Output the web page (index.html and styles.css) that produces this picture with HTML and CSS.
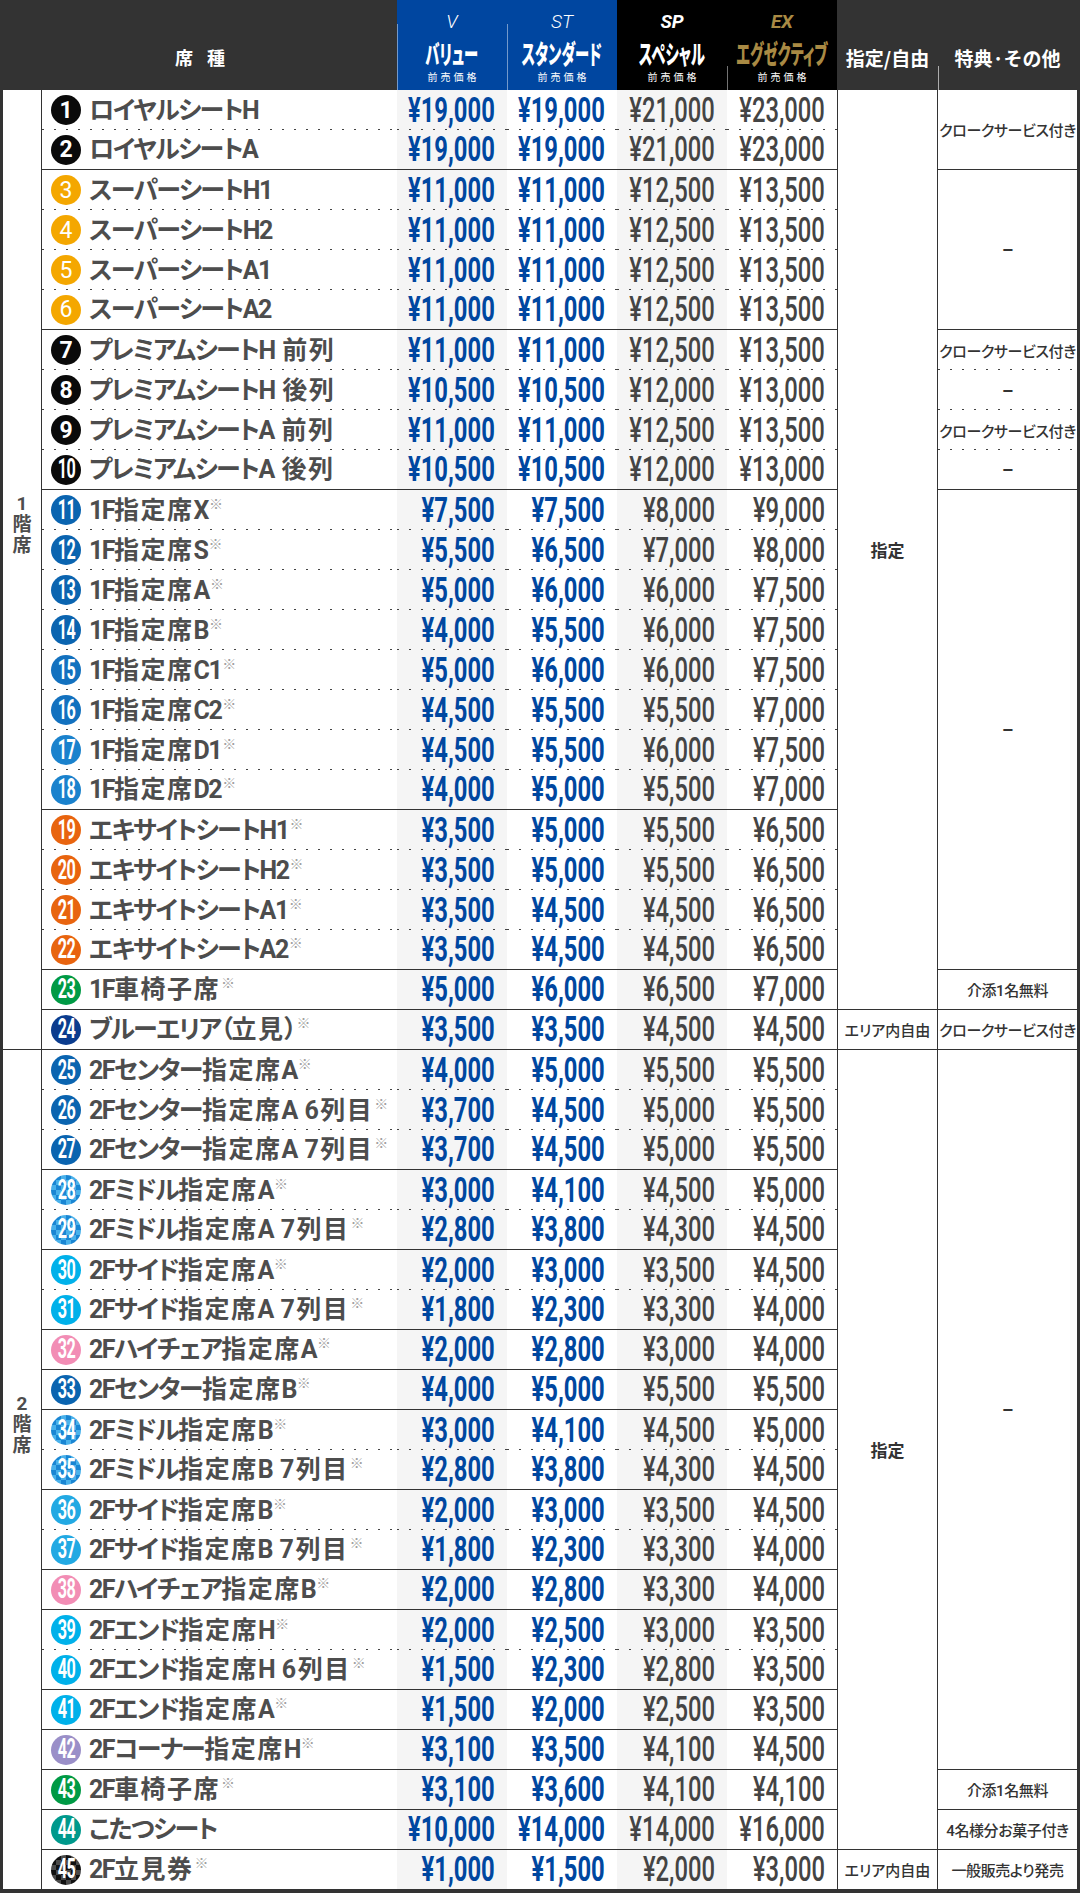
FILE: index.html
```html
<!DOCTYPE html>
<html lang="ja">
<head>
<meta charset="utf-8">
<title>席種・価格表</title>
<link rel="stylesheet" href="styles.css">
</head>
<body>
<div class="tbl">
  <div class="h hs">席 種</div>
  <div class="h hp hv"><em class="lt">V</em><strong class="tt"><span>バリュー</span></strong><small>前売価格</small></div>
  <div class="h hp hst"><em class="lt">ST</em><strong class="tt"><span>スタンダード</span></strong><small>前売価格</small></div>
  <div class="h hp hsp"><em class="bd">SP</em><strong class="tt"><span>スペシャル</span></strong><small>前売価格</small></div>
  <div class="h hp hex"><em class="bd gold">EX</em><strong class="tt gold"><span>エグゼクティブ</span></strong><small>前売価格</small></div>
  <div class="h hsh">指定/自由</div>
  <div class="h htk">特典·その他</div>

  <div class="r d"><div class="fl s24">1<br>階<br>席</div><div class="nmc"><i class="n k"><b>1</b></i><span class="nm">ロイヤルシートH</span></div><div class="p v"><span>¥19,000</span></div><div class="p st"><span>¥19,000</span></div><div class="p sp"><span>¥21,000</span></div><div class="p ex"><span>¥23,000</span></div><div class="sh s23">指定</div><div class="tk s2">クロークサービス付き</div></div>
  <div class="r e"><div class="nmc"><i class="n k"><b>2</b></i><span class="nm">ロイヤルシートA</span></div><div class="p v"><span>¥19,000</span></div><div class="p st"><span>¥19,000</span></div><div class="p sp"><span>¥21,000</span></div><div class="p ex"><span>¥23,000</span></div></div>
  <div class="r d"><div class="nmc"><i class="n y"><b>3</b></i><span class="nm">スーパーシートH1</span></div><div class="p v"><span>¥11,000</span></div><div class="p st"><span>¥11,000</span></div><div class="p sp"><span>¥12,500</span></div><div class="p ex"><span>¥13,500</span></div><div class="tk s4"><span class="dash">–</span></div></div>
  <div class="r d"><div class="nmc"><i class="n y"><b>4</b></i><span class="nm">スーパーシートH2</span></div><div class="p v"><span>¥11,000</span></div><div class="p st"><span>¥11,000</span></div><div class="p sp"><span>¥12,500</span></div><div class="p ex"><span>¥13,500</span></div></div>
  <div class="r d"><div class="nmc"><i class="n y"><b>5</b></i><span class="nm">スーパーシートA1</span></div><div class="p v"><span>¥11,000</span></div><div class="p st"><span>¥11,000</span></div><div class="p sp"><span>¥12,500</span></div><div class="p ex"><span>¥13,500</span></div></div>
  <div class="r e"><div class="nmc"><i class="n y"><b>6</b></i><span class="nm">スーパーシートA2</span></div><div class="p v"><span>¥11,000</span></div><div class="p st"><span>¥11,000</span></div><div class="p sp"><span>¥12,500</span></div><div class="p ex"><span>¥13,500</span></div></div>
  <div class="r d"><div class="nmc"><i class="n k"><b>7</b></i><span class="nm">プレミアムシートH<span class="kj"> 前列</span></span></div><div class="p v"><span>¥11,000</span></div><div class="p st"><span>¥11,000</span></div><div class="p sp"><span>¥12,500</span></div><div class="p ex"><span>¥13,500</span></div><div class="tk d">クロークサービス付き</div></div>
  <div class="r d"><div class="nmc"><i class="n k"><b>8</b></i><span class="nm">プレミアムシートH<span class="kj"> 後列</span></span></div><div class="p v"><span>¥10,500</span></div><div class="p st"><span>¥10,500</span></div><div class="p sp"><span>¥12,000</span></div><div class="p ex"><span>¥13,000</span></div><div class="tk d"><span class="dash">–</span></div></div>
  <div class="r d"><div class="nmc"><i class="n k"><b>9</b></i><span class="nm">プレミアムシートA<span class="kj"> 前列</span></span></div><div class="p v"><span>¥11,000</span></div><div class="p st"><span>¥11,000</span></div><div class="p sp"><span>¥12,500</span></div><div class="p ex"><span>¥13,500</span></div><div class="tk d">クロークサービス付き</div></div>
  <div class="r e"><div class="nmc"><i class="n k w2"><b>10</b></i><span class="nm">プレミアムシートA<span class="kj"> 後列</span></span></div><div class="p v"><span>¥10,500</span></div><div class="p st"><span>¥10,500</span></div><div class="p sp"><span>¥12,000</span></div><div class="p ex"><span>¥13,000</span></div><div class="tk"><span class="dash">–</span></div></div>
  <div class="r d"><div class="nmc"><i class="n b1 w2"><b>11</b></i><span class="nm">1F<span class="kj">指定席</span>X<sup>※</sup></span></div><div class="p v"><span>¥7,500</span></div><div class="p st"><span>¥7,500</span></div><div class="p sp"><span>¥8,000</span></div><div class="p ex"><span>¥9,000</span></div><div class="tk s12"><span class="dash">–</span></div></div>
  <div class="r d"><div class="nmc"><i class="n b1 w2"><b>12</b></i><span class="nm">1F<span class="kj">指定席</span>S<sup>※</sup></span></div><div class="p v"><span>¥5,500</span></div><div class="p st"><span>¥6,500</span></div><div class="p sp"><span>¥7,000</span></div><div class="p ex"><span>¥8,000</span></div></div>
  <div class="r d"><div class="nmc"><i class="n b1 w2"><b>13</b></i><span class="nm">1F<span class="kj">指定席</span>A<sup>※</sup></span></div><div class="p v"><span>¥5,000</span></div><div class="p st"><span>¥6,000</span></div><div class="p sp"><span>¥6,000</span></div><div class="p ex"><span>¥7,500</span></div></div>
  <div class="r d"><div class="nmc"><i class="n b1 w2"><b>14</b></i><span class="nm">1F<span class="kj">指定席</span>B<sup>※</sup></span></div><div class="p v"><span>¥4,000</span></div><div class="p st"><span>¥5,500</span></div><div class="p sp"><span>¥6,000</span></div><div class="p ex"><span>¥7,500</span></div></div>
  <div class="r d"><div class="nmc"><i class="n b2 w2"><b>15</b></i><span class="nm">1F<span class="kj">指定席</span>C1<sup>※</sup></span></div><div class="p v"><span>¥5,000</span></div><div class="p st"><span>¥6,000</span></div><div class="p sp"><span>¥6,000</span></div><div class="p ex"><span>¥7,500</span></div></div>
  <div class="r d"><div class="nmc"><i class="n b2 w2"><b>16</b></i><span class="nm">1F<span class="kj">指定席</span>C2<sup>※</sup></span></div><div class="p v"><span>¥4,500</span></div><div class="p st"><span>¥5,500</span></div><div class="p sp"><span>¥5,500</span></div><div class="p ex"><span>¥7,000</span></div></div>
  <div class="r d"><div class="nmc"><i class="n b3 w2"><b>17</b></i><span class="nm">1F<span class="kj">指定席</span>D1<sup>※</sup></span></div><div class="p v"><span>¥4,500</span></div><div class="p st"><span>¥5,500</span></div><div class="p sp"><span>¥6,000</span></div><div class="p ex"><span>¥7,500</span></div></div>
  <div class="r e"><div class="nmc"><i class="n b3 w2"><b>18</b></i><span class="nm">1F<span class="kj">指定席</span>D2<sup>※</sup></span></div><div class="p v"><span>¥4,000</span></div><div class="p st"><span>¥5,000</span></div><div class="p sp"><span>¥5,500</span></div><div class="p ex"><span>¥7,000</span></div></div>
  <div class="r d"><div class="nmc"><i class="n o w2"><b>19</b></i><span class="nm">エキサイトシートH1<sup>※</sup></span></div><div class="p v"><span>¥3,500</span></div><div class="p st"><span>¥5,000</span></div><div class="p sp"><span>¥5,500</span></div><div class="p ex"><span>¥6,500</span></div></div>
  <div class="r d"><div class="nmc"><i class="n o w2"><b>20</b></i><span class="nm">エキサイトシートH2<sup>※</sup></span></div><div class="p v"><span>¥3,500</span></div><div class="p st"><span>¥5,000</span></div><div class="p sp"><span>¥5,500</span></div><div class="p ex"><span>¥6,500</span></div></div>
  <div class="r d"><div class="nmc"><i class="n o w2"><b>21</b></i><span class="nm">エキサイトシートA1<sup>※</sup></span></div><div class="p v"><span>¥3,500</span></div><div class="p st"><span>¥4,500</span></div><div class="p sp"><span>¥4,500</span></div><div class="p ex"><span>¥6,500</span></div></div>
  <div class="r e"><div class="nmc"><i class="n o w2"><b>22</b></i><span class="nm">エキサイトシートA2<sup>※</sup></span></div><div class="p v"><span>¥3,500</span></div><div class="p st"><span>¥4,500</span></div><div class="p sp"><span>¥4,500</span></div><div class="p ex"><span>¥6,500</span></div></div>
  <div class="r e"><div class="nmc"><i class="n g w2"><b>23</b></i><span class="nm">1F<span class="kj">車椅子席</span><sup>※</sup></span></div><div class="p v"><span>¥5,000</span></div><div class="p st"><span>¥6,000</span></div><div class="p sp"><span>¥6,500</span></div><div class="p ex"><span>¥7,000</span></div><div class="tk">介添1名無料</div></div>
  <div class="r e"><div class="nmc"><i class="n nv w2"><b>24</b></i><span class="nm">ブルーエリア（<span class="kj">立見</span>）<sup>※</sup></span></div><div class="p v"><span>¥3,500</span></div><div class="p st"><span>¥3,500</span></div><div class="p sp"><span>¥4,500</span></div><div class="p ex"><span>¥4,500</span></div><div class="sh fr">エリア内自由</div><div class="tk">クロークサービス付き</div></div>

  <div class="r d"><div class="fl s21">2<br>階<br>席</div><div class="nmc"><i class="n b1 w2"><b>25</b></i><span class="nm">2Fセンター<span class="kj">指定席</span>A<sup>※</sup></span></div><div class="p v"><span>¥4,000</span></div><div class="p st"><span>¥5,000</span></div><div class="p sp"><span>¥5,500</span></div><div class="p ex"><span>¥5,500</span></div><div class="sh s20">指定</div><div class="tk s18"><span class="dash">–</span></div></div>
  <div class="r d"><div class="nmc"><i class="n b1 w2"><b>26</b></i><span class="nm">2Fセンター<span class="kj">指定席</span>A<span class="kj"> 6列目</span><sup>※</sup></span></div><div class="p v"><span>¥3,700</span></div><div class="p st"><span>¥4,500</span></div><div class="p sp"><span>¥5,000</span></div><div class="p ex"><span>¥5,500</span></div></div>
  <div class="r e"><div class="nmc"><i class="n b1 w2"><b>27</b></i><span class="nm">2Fセンター<span class="kj">指定席</span>A<span class="kj"> 7列目</span><sup>※</sup></span></div><div class="p v"><span>¥3,700</span></div><div class="p st"><span>¥4,500</span></div><div class="p sp"><span>¥5,000</span></div><div class="p ex"><span>¥5,500</span></div></div>
  <div class="r d"><div class="nmc"><i class="n ck w2"><b>28</b></i><span class="nm">2Fミドル<span class="kj">指定席</span>A<sup>※</sup></span></div><div class="p v"><span>¥3,000</span></div><div class="p st"><span>¥4,100</span></div><div class="p sp"><span>¥4,500</span></div><div class="p ex"><span>¥5,000</span></div></div>
  <div class="r e"><div class="nmc"><i class="n ck w2"><b>29</b></i><span class="nm">2Fミドル<span class="kj">指定席</span>A<span class="kj"> 7列目</span><sup>※</sup></span></div><div class="p v"><span>¥2,800</span></div><div class="p st"><span>¥3,800</span></div><div class="p sp"><span>¥4,300</span></div><div class="p ex"><span>¥4,500</span></div></div>
  <div class="r d"><div class="nmc"><i class="n c w2"><b>30</b></i><span class="nm">2Fサイド<span class="kj">指定席</span>A<sup>※</sup></span></div><div class="p v"><span>¥2,000</span></div><div class="p st"><span>¥3,000</span></div><div class="p sp"><span>¥3,500</span></div><div class="p ex"><span>¥4,500</span></div></div>
  <div class="r e"><div class="nmc"><i class="n c w2"><b>31</b></i><span class="nm">2Fサイド<span class="kj">指定席</span>A<span class="kj"> 7列目</span><sup>※</sup></span></div><div class="p v"><span>¥1,800</span></div><div class="p st"><span>¥2,300</span></div><div class="p sp"><span>¥3,300</span></div><div class="p ex"><span>¥4,000</span></div></div>
  <div class="r e"><div class="nmc"><i class="n pk w2"><b>32</b></i><span class="nm">2Fハイチェア<span class="kj">指定席</span>A<sup>※</sup></span></div><div class="p v"><span>¥2,000</span></div><div class="p st"><span>¥2,800</span></div><div class="p sp"><span>¥3,000</span></div><div class="p ex"><span>¥4,000</span></div></div>
  <div class="r e"><div class="nmc"><i class="n b1 w2"><b>33</b></i><span class="nm">2Fセンター<span class="kj">指定席</span>B<sup>※</sup></span></div><div class="p v"><span>¥4,000</span></div><div class="p st"><span>¥5,000</span></div><div class="p sp"><span>¥5,500</span></div><div class="p ex"><span>¥5,500</span></div></div>
  <div class="r d"><div class="nmc"><i class="n ck w2"><b>34</b></i><span class="nm">2Fミドル<span class="kj">指定席</span>B<sup>※</sup></span></div><div class="p v"><span>¥3,000</span></div><div class="p st"><span>¥4,100</span></div><div class="p sp"><span>¥4,500</span></div><div class="p ex"><span>¥5,000</span></div></div>
  <div class="r e"><div class="nmc"><i class="n ck w2"><b>35</b></i><span class="nm">2Fミドル<span class="kj">指定席</span>B<span class="kj"> 7列目</span><sup>※</sup></span></div><div class="p v"><span>¥2,800</span></div><div class="p st"><span>¥3,800</span></div><div class="p sp"><span>¥4,300</span></div><div class="p ex"><span>¥4,500</span></div></div>
  <div class="r d"><div class="nmc"><i class="n c2 w2"><b>36</b></i><span class="nm">2Fサイド<span class="kj">指定席</span>B<sup>※</sup></span></div><div class="p v"><span>¥2,000</span></div><div class="p st"><span>¥3,000</span></div><div class="p sp"><span>¥3,500</span></div><div class="p ex"><span>¥4,500</span></div></div>
  <div class="r e"><div class="nmc"><i class="n c2 w2"><b>37</b></i><span class="nm">2Fサイド<span class="kj">指定席</span>B<span class="kj"> 7列目</span><sup>※</sup></span></div><div class="p v"><span>¥1,800</span></div><div class="p st"><span>¥2,300</span></div><div class="p sp"><span>¥3,300</span></div><div class="p ex"><span>¥4,000</span></div></div>
  <div class="r e"><div class="nmc"><i class="n pk w2"><b>38</b></i><span class="nm">2Fハイチェア<span class="kj">指定席</span>B<sup>※</sup></span></div><div class="p v"><span>¥2,000</span></div><div class="p st"><span>¥2,800</span></div><div class="p sp"><span>¥3,300</span></div><div class="p ex"><span>¥4,000</span></div></div>
  <div class="r d"><div class="nmc"><i class="n c w2"><b>39</b></i><span class="nm">2Fエンド<span class="kj">指定席</span>H<sup>※</sup></span></div><div class="p v"><span>¥2,000</span></div><div class="p st"><span>¥2,500</span></div><div class="p sp"><span>¥3,000</span></div><div class="p ex"><span>¥3,500</span></div></div>
  <div class="r e"><div class="nmc"><i class="n c w2"><b>40</b></i><span class="nm">2Fエンド<span class="kj">指定席</span>H<span class="kj"> 6列目</span><sup>※</sup></span></div><div class="p v"><span>¥1,500</span></div><div class="p st"><span>¥2,300</span></div><div class="p sp"><span>¥2,800</span></div><div class="p ex"><span>¥3,500</span></div></div>
  <div class="r e"><div class="nmc"><i class="n c w2"><b>41</b></i><span class="nm">2Fエンド<span class="kj">指定席</span>A<sup>※</sup></span></div><div class="p v"><span>¥1,500</span></div><div class="p st"><span>¥2,000</span></div><div class="p sp"><span>¥2,500</span></div><div class="p ex"><span>¥3,500</span></div></div>
  <div class="r e"><div class="nmc"><i class="n pu w2"><b>42</b></i><span class="nm">2Fコーナー<span class="kj">指定席</span>H<sup>※</sup></span></div><div class="p v"><span>¥3,100</span></div><div class="p st"><span>¥3,500</span></div><div class="p sp"><span>¥4,100</span></div><div class="p ex"><span>¥4,500</span></div></div>
  <div class="r e"><div class="nmc"><i class="n g w2"><b>43</b></i><span class="nm">2F<span class="kj">車椅子席</span><sup>※</sup></span></div><div class="p v"><span>¥3,100</span></div><div class="p st"><span>¥3,600</span></div><div class="p sp"><span>¥4,100</span></div><div class="p ex"><span>¥4,100</span></div><div class="tk">介添1名無料</div></div>
  <div class="r e"><div class="nmc"><i class="n t w2"><b>44</b></i><span class="nm">こたつシート</span></div><div class="p v"><span>¥10,000</span></div><div class="p st"><span>¥14,000</span></div><div class="p sp"><span>¥14,000</span></div><div class="p ex"><span>¥16,000</span></div><div class="tk">4名様分お菓子付き</div></div>
  <div class="r e"><div class="nmc"><i class="n kk w2"><b>45</b></i><span class="nm">2F<span class="kj">立見券</span><sup>※</sup></span></div><div class="p v"><span>¥1,000</span></div><div class="p st"><span>¥1,500</span></div><div class="p sp"><span>¥2,000</span></div><div class="p ex"><span>¥3,000</span></div><div class="sh fr">エリア内自由</div><div class="tk">一般販売より発売</div></div>
</div>
</body>
</html>
```
FILE: styles.css
```css
* { box-sizing: border-box; margin: 0; padding: 0; }
html, body { background: #333; }
body {
  width: 1080px;
  height: 1893px;
  font-family: Roboto, "Noto Sans CJK JP", sans-serif;
  overflow: hidden;
}
.tbl {
  display: grid;
  grid-template-columns: 39px 355px 110px 110px 110px 110px 101px 139px;
  grid-template-rows: 90px repeat(45, 40px);
  margin: 0 3px;
  background: #fff;
}
.r { display: contents; }

/* header */
.h {
  grid-row: 1;
  background: #333;
  color: #fff;
  position: relative;
  display: flex;
  flex-direction: column;
  align-items: center;
  justify-content: center;
  font-family: "Noto Sans CJK JP", sans-serif;
  font-weight: 700;
}
.hs { grid-column: 1 / span 2; font-size: 18px; letter-spacing: 5px; padding: 24px 0 0 5px; }
.hsh { grid-column: 7; font-size: 19px; padding-top: 24px; }
.htk { grid-column: 8; font-size: 19px; padding-top: 24px; }
.hv { grid-column: 3; background: #0046a0; }
.hst { grid-column: 4; background: #0046a0; }
.hsp { grid-column: 5; background: #000; }
.hex { grid-column: 6; background: #000; }
.hp { justify-content: flex-start; padding-top: 12px; }
.hp em {
  display: block;
  font-family: Roboto, sans-serif;
  font-style: italic;
  font-size: 19px;
  line-height: 20px;
  height: 20px;
}
.hp em.lt { font-weight: 300; }
.hp em.bd { font-weight: 700; }
.hp .tt {
  display: block;
  margin-top: 9px;
  height: 24px;
  line-height: 24px;
  font-size: 26px;
  white-space: nowrap;
  font-feature-settings: "palt";
}
.hp .tt span { display: inline-block; transform: scaleX(.55); transform-origin: 50% 50%; }
.hp small {
  display: block;
  margin-top: 6px;
  font-size: 10px;
  line-height: 12px;
  letter-spacing: 3px;
  padding-left: 3px;
  font-weight: 400;
}
.gold { color: #a98a44; }
.hv::before, .hst::before, .hex::before, .htk::before {
  content: "";
  position: absolute;
  left: 0;
  bottom: 0;
  width: 1px;
  background: rgba(255, 255, 255, .45);
}
.hv::before { top: 24px; }
.hst::before { top: 24px; }
.hex::before { top: 66px; }
.htk::before { top: 66px; background: rgba(255, 255, 255, .6); }

/* body cells */
.s2 { grid-row: span 2; }
.s4 { grid-row: span 4; }
.s12 { grid-row: span 12; }
.s18 { grid-row: span 18; }
.s20 { grid-row: span 20; }
.s21 { grid-row: span 21; }
.s23 { grid-row: span 23; }
.s24 { grid-row: span 24; }

.fl {
  grid-column: 1;
  border-right: 1px solid #333;
  border-bottom: 1px solid #333;
  display: flex;
  align-items: center;
  justify-content: center;
  padding-bottom: 90px;
  text-align: center;
  font-weight: 700;
  font-size: 19px;
  line-height: 21px;
  color: #4d4d4d;
}
.nmc {
  grid-column: 2;
  display: flex;
  align-items: center;
  gap: 8px;
  padding-left: 9px;
  overflow: hidden;
}
.p {
  display: flex;
  align-items: center;
  justify-content: flex-end;
  padding-right: 12px;
}
.p.v { grid-column: 3; background-color: #f5f5f5; }
.p.st { grid-column: 4; }
.p.sp { grid-column: 5; background-color: #f5f5f5; }
.p.ex { grid-column: 6; }
.p span {
  display: inline-block;
  font-family: Roboto, sans-serif;
  font-weight: 700;
  font-size: 35px;
  line-height: 1;
  color: #0047a0;
  transform: scaleX(.68);
  transform-origin: 100% 50%;
  white-space: nowrap;
}
.p.sp span, .p.ex span { color: #444; font-weight: 500; }

.r.e > .nmc, .r.e > .p { border-bottom: 1px solid #333; }
.r.d > .nmc, .r.d > .p, .tk.d {
  background-image: linear-gradient(90deg, #444 0 2px, transparent 2px 100%);
  background-size: 12px 1px;
  background-repeat: repeat-x;
  background-position: 0 100%;
}

.sh {
  grid-column: 7;
  border-left: 1px solid #333;
  border-right: 1px solid #333;
  border-bottom: 1px solid #333;
  display: flex;
  align-items: center;
  justify-content: center;
  font-family: "Noto Sans CJK JP", sans-serif;
  font-weight: 700;
  font-size: 17px;
  color: #333;
}
.sh.fr { font-weight: 500; font-size: 15px; font-feature-settings: "palt"; }
.tk {
  grid-column: 8;
  border-bottom: 1px solid #333;
  display: flex;
  align-items: center;
  justify-content: center;
  font-family: Roboto, "Noto Sans CJK JP", sans-serif;
  font-weight: 500;
  font-size: 15px;
  color: #333;
  white-space: nowrap;
  font-feature-settings: "palt";
  letter-spacing: -.4px;
}
.tk.d { border-bottom: 0; }
.dash { font-family: Roboto, sans-serif; font-weight: 700; font-size: 18px; color: #333; }

/* seat number badges */
.n {
  flex: none;
  width: 30px;
  height: 30px;
  border-radius: 50%;
  display: flex;
  align-items: center;
  justify-content: center;
  color: #fff;
  font-style: normal;
}
.n b {
  display: inline-block;
  font-family: Roboto, sans-serif;
  font-weight: 700;
  font-size: 23px;
  line-height: 1;
}
.n.w2 b { font-size: 27px; transform: scaleX(.6); letter-spacing: -1px; }
.n.y b { font-weight: 400; }
.k { background: #0a0a0a; }
.y { background: #f4a700; }
.b1 { background: #0a64b0; }
.b2 { background: #1271bf; }
.b3 { background: #1a82cd; }
.o { background: #e8640f; }
.g { background: #009a45; }
.nv { background: #0b3c8e; }
.ck { background: repeating-conic-gradient(#1a86d3 0 25%, #49b1ea 0 50%) 0 0 / 10px 10px; }
.c { background: #00b1ea; }
.c2 { background: #22a9e3; }
.pk { background: #f28db5; }
.pu { background: #9a8fc8; }
.t { background: #00998c; }
.kk { background: repeating-conic-gradient(#111 0 25%, #4a4a4a 0 50%) 0 0 / 10px 10px; }

.nm {
  font-family: Roboto, "Noto Sans CJK JP", sans-serif;
  font-weight: 700;
  font-size: 25px;
  line-height: 1;
  letter-spacing: -1.5px;
  color: #4d4d4d;
  white-space: nowrap;
  font-feature-settings: "palt";
}
.nm .kj { letter-spacing: 1.5px; }
.nm sup {
  font-family: "Noto Sans CJK JP", sans-serif;
  font-size: 14px;
  font-weight: 400;
  letter-spacing: 0;
  color: #a0a0a0;
  vertical-align: 10px;
  line-height: 0;
  margin-left: 1px;
}
```
